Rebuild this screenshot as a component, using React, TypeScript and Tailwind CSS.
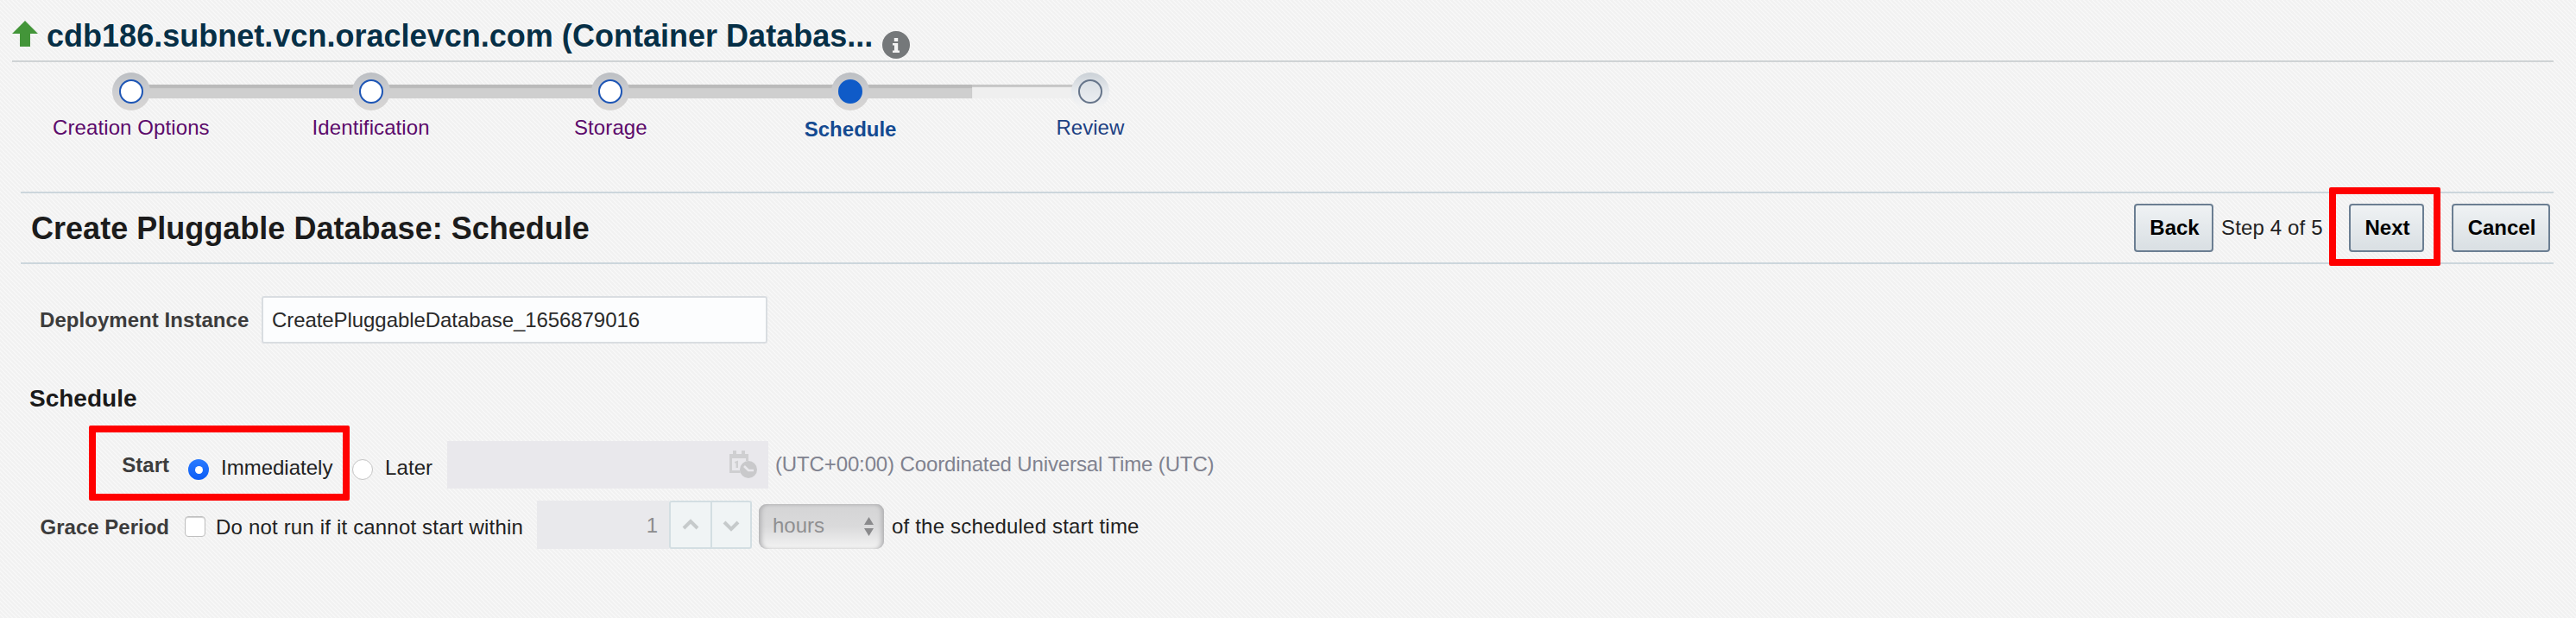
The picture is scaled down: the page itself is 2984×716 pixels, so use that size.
import React from "react";

type StepState = "done" | "current" | "upcoming";

const steps: { label: string; state: StepState }[] = [
  { label: "Creation Options", state: "done" },
  { label: "Identification", state: "done" },
  { label: "Storage", state: "done" },
  { label: "Schedule", state: "current" },
  { label: "Review", state: "upcoming" },
];

const ringStyle: Record<StepState, string> = {
  done: "bg-linear-to-b from-[#bcbfc3] via-[#cdced1] to-[#d8d6d4]",
  current: "bg-linear-to-b from-[#bcbfc3] via-[#cdced1] to-[#d8d6d4]",
  upcoming: "bg-linear-to-b from-[#cbd1d7] via-[#e8ebee] to-[#f5f5f5]",
};

const dotStyle: Record<StepState, string> = {
  done: "border-[#1d55b5] bg-white",
  current: "border-[#0f5bc8] bg-[#0f5bc8]",
  upcoming: "border-[#66758a] bg-linear-to-b from-[#dbe0e5] to-[#eaedf0]",
};

const labelStyle: Record<StepState, string> = {
  done: "tracking-[0.1px] text-[#5c0a6b]",
  current: "mt-[2px] font-bold text-[#144a91]",
  upcoming: "text-[#1d4183]",
};

function Step({ label, state }: { label: string; state: StepState }) {
  return (
    <li className="flex w-[277.75px] flex-col items-center">
      <span className={`flex size-[44px] items-center justify-center rounded-full ${ringStyle[state]}`}>
        <span className={`size-[28px] rounded-full border-2 ${dotStyle[state]}`} />
      </span>
      <span className="mt-[8px]">
        <span className={`block ${labelStyle[state]}`}>{label}</span>
      </span>
    </li>
  );
}

function TrainNav() {
  return (
    <nav className="relative mt-[12px] h-[94px]">
      <div className="absolute top-[14px] left-[152px] h-[16px] w-[974px] bg-[#cfcfcf] shadow-[inset_0_4px_1px_#bababa]" />
      <div className="absolute top-[14px] left-[1126px] h-[16px] w-[137px] bg-[#efefef] shadow-[inset_0_3px_1px_#c6c6c6]" />
      <ol className="relative ml-[13px] flex w-max">
        {steps.map((s) => (
          <Step key={s.label} label={s.label} state={s.state} />
        ))}
      </ol>
    </nav>
  );
}

function PageButton({ children, className }: { children: React.ReactNode; className: string }) {
  return (
    <button
      className={`h-[56px] rounded-[4px] border-2 border-[#6b7e92] bg-linear-to-b from-[#eff2f4] to-[#d9dfe3] pl-[2px] text-center font-bold text-black ${className}`}
    >
      {children}
    </button>
  );
}

function InfoIcon() {
  return (
    <svg className="mt-[36px] ml-[11px] size-[32px]" viewBox="0 0 32 32">
      <circle cx="16" cy="16" r="16" fill="#75787a" />
      <path d="M13.8 8h4.4v4h-4.4zM12 14h6.2v8.4H20V25h-8v-2.6h2v-5.8h-2z" fill="#f4f4f4" />
    </svg>
  );
}

function CalendarIcon() {
  return (
    <svg className="size-[34px]" viewBox="0 0 34 34">
      <path d="M2.5 7v18.500h11" fill="none" stroke="#cfcfd1" strokeWidth="3" />
      <path d="M1 5h22v5H1zM5 1h4v5H5zM15 1h4v5h-4zM20 9h3v4h-3z" fill="#cfcfd1" />
      <path d="M7 14l4-1.500V21H8.500v-5.500H7z" fill="#cfcfd1" />
      <circle cx="23" cy="23" r="10" fill="#c9c9cb" />
      <path d="M18 19l5 5h6" fill="none" stroke="#e9e8ec" strokeWidth="2.600" />
    </svg>
  );
}

export default function App() {
  return (
    <div className="flex h-[716px] w-[2984px] flex-col overflow-hidden bg-[#f4f4f4] bg-[linear-gradient(45deg,#f1f1f1_25%,#f7f7f7_25%,#f7f7f7_50%,#f1f1f1_50%,#f1f1f1_75%,#f7f7f7_75%)] bg-[length:5px_5px] font-['Liberation_Sans',Arial,sans-serif] text-[24px] leading-[24px] text-[#222]">
      <header className="mr-[26px] ml-[14px] flex h-[72px] items-start border-b-2 border-[#cfd3d5]">
        <svg className="mt-[24px] h-[30px] w-[30px]" viewBox="0 0 30 30">
          <path d="M15 0L30 15H21V30H9V15H0Z" fill="#439539" />
        </svg>
        <h1 className="mt-[24px] ml-[10px] text-[36px] leading-[36px] font-bold tracking-[0.02px] whitespace-nowrap text-[#062f46]">
          cdb186.subnet.vcn.oraclevcn.com (Container Databas...
        </h1>
        <InfoIcon />
      </header>

      <TrainNav />

      <section className="mt-[44px] mr-[26px] ml-[24px] flex h-[84px] items-start justify-between border-y-2 border-[#ccd6dc]">
        <h2 className="mt-[23px] ml-[12px] text-[36px] leading-[36px] font-bold tracking-[0.02px] text-[#1c1c1c]">
          Create Pluggable Database: Schedule
        </h2>
        <div className="mt-[12px] mr-[4px] flex items-center">
          <PageButton className="w-[92px]">Back</PageButton>
          <span className="ml-[9px] w-[148px] tracking-[0.15px] whitespace-nowrap">Step 4 of 5</span>
          <div className="relative flex">
            <PageButton className="w-[87px]">Next</PageButton>
            <span className="absolute -top-[19px] -left-[23px] h-[91px] w-[129px] rounded-[2px] border-8 border-[#ff0000]" />
          </div>
          <PageButton className="ml-[32px] w-[114px]">Cancel</PageButton>
        </div>
      </section>

      <div className="mt-[37px] ml-[46px] flex h-[55px] items-center">
        <label className="w-[257px] font-bold tracking-[0.05px] text-[#3c3c3c]">Deployment Instance</label>
        <input
          readOnly
          value="CreatePluggableDatabase_1656879016"
          className="h-[55px] w-[586px] rounded-[3px] border-2 border-[#d9dde1] bg-[#fcfdfe] px-[10px] tracking-[-0.07px] text-[#2a2a2a] outline-none"
        />
      </div>

      <h3 className="mt-[50px] ml-[34px] text-[28px] leading-[28px] font-bold text-[#1a1a1a]">Schedule</h3>

      <div className="relative mt-[35px] flex h-[55px] items-start">
        <span className="mt-[16px] w-[196px] text-right font-bold text-[#3c3c3c]">Start</span>
        <span className="mt-[21px] ml-[22px] flex size-[24px] items-center justify-center rounded-full bg-linear-to-b from-[#2a7bff] to-[#0a5cf5]">
          <span className="size-[9px] rounded-full bg-white" />
        </span>
        <span className="mt-[19px] ml-[14px] w-[152px]">Immediately</span>
        <span className="mt-[21px] size-[24px] rounded-full border border-[#c4c4c4] bg-white" />
        <span className="mt-[19px] ml-[14px] w-[72px] tracking-[0.1px]">Later</span>
        <div className="flex h-[55px] w-[372px] items-start justify-end bg-[#e9e8ec] pt-[10px] pr-[12px]">
          <CalendarIcon />
        </div>
        <span className="mt-[15px] ml-[8px] tracking-[-0.13px] whitespace-nowrap text-[#80828f]">
          (UTC+00:00) Coordinated Universal Time (UTC)
        </span>
        <span className="absolute -top-[18px] left-[103px] h-[87px] w-[302px] rounded-[2px] border-8 border-[#ff0000]" />
      </div>

      <div className="mt-[14px] flex h-[56px] items-start">
        <span className="mt-[19px] w-[196px] text-right font-bold whitespace-nowrap text-[#3c3c3c]">Grace Period</span>
        <span className="mt-[18px] ml-[18px] size-[24px] rounded-[4px] border border-[#c0c0c0] bg-white shadow-[inset_0_1px_1px_#ccc]" />
        <span className="mt-[19px] ml-[12px] w-[372px] tracking-[0.18px] whitespace-nowrap">
          Do not run if it cannot start within
        </span>
        <div className="h-[56px] w-[153px] bg-[#e9e9ec] pt-[17px] pr-[13px] text-right text-[#8b8b8d]">1</div>
        <div className="flex h-[56px] w-[96px] rounded-[3px] border-2 border-[#d3dee2] bg-[#f0f4f5]">
          <div className="flex w-[48px] items-center justify-center border-r-2 border-[#d3dee2]">
            <svg className="size-[20px]" viewBox="0 0 20 20">
              <path d="M2 14L10 6L18 14" fill="none" stroke="#c6cacb" strokeWidth="4" />
            </svg>
          </div>
          <div className="flex flex-1 items-center justify-center">
            <svg className="size-[20px]" viewBox="0 0 20 20">
              <path d="M2 7L10 15L18 7" fill="none" stroke="#c6cacb" strokeWidth="4" />
            </svg>
          </div>
        </div>
        <div className="mt-[4px] ml-[8px] flex h-[52px] w-[145px] items-start justify-between rounded-[9px] bg-linear-to-b from-[#d4d4d5] via-[#dadadb] to-[#f3f3f3] pr-[12px] pl-[16px] text-[#8f8f91] shadow-[inset_5px_0_5px_-2px_#b4b4b6,inset_-5px_0_5px_-2px_#b4b4b6,inset_0_2px_3px_#c4c4c6]">
          <span className="mt-[13px]">hours</span>
          <svg className="mt-[15px] h-[22px] w-[11px]" viewBox="0 0 11 22">
            <path d="M5.500 0L11 9H0ZM0 13H11L5.500 22Z" fill="#8a8a8c" />
          </svg>
        </div>
        <span className="mt-[18px] ml-[9px] tracking-[0.19px] whitespace-nowrap">of the scheduled start time</span>
      </div>
    </div>
  );
}
